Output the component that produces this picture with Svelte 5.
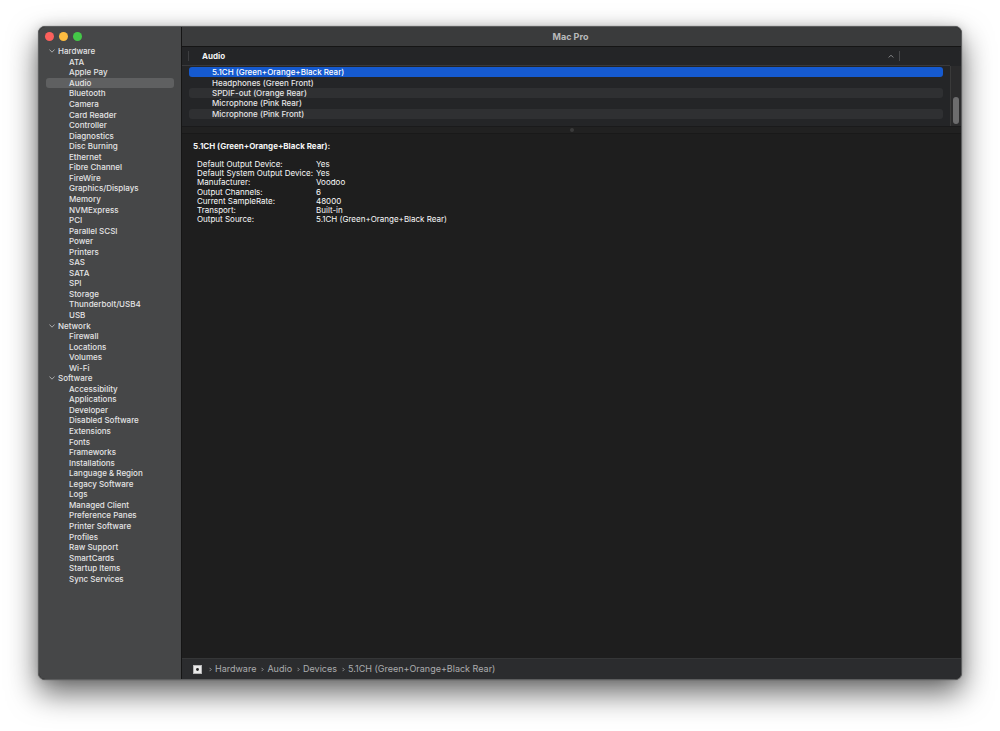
<script>
  const groups = [
    { name: 'Hardware', items: ['ATA', 'Apple Pay', 'Audio', 'Bluetooth', 'Camera', 'Card Reader', 'Controller', 'Diagnostics', 'Disc Burning', 'Ethernet', 'Fibre Channel', 'FireWire', 'Graphics/Displays', 'Memory', 'NVMExpress', 'PCI', 'Parallel SCSI', 'Power', 'Printers', 'SAS', 'SATA', 'SPI', 'Storage', 'Thunderbolt/USB4', 'USB'] },
    { name: 'Network', items: ['Firewall', 'Locations', 'Volumes', 'Wi-Fi'] },
    { name: 'Software', items: ['Accessibility', 'Applications', 'Developer', 'Disabled Software', 'Extensions', 'Fonts', 'Frameworks', 'Installations', 'Language & Region', 'Legacy Software', 'Logs', 'Managed Client', 'Preference Panes', 'Printer Software', 'Profiles', 'Raw Support', 'SmartCards', 'Startup Items', 'Sync Services'] }
  ];
  const devices = ['5.1CH (Green+Orange+Black Rear)', 'Headphones (Green Front)', 'SPDIF-out (Orange Rear)', 'Microphone (Pink Rear)', 'Microphone (Pink Front)'];
  const details = [
    ['Default Output Device:', 'Yes'],
    ['Default System Output Device:', 'Yes'],
    ['Manufacturer:', 'Voodoo'],
    ['Output Channels:', '6'],
    ['Current SampleRate:', '48000'],
    ['Transport:', 'Built-in'],
    ['Output Source:', '5.1CH (Green+Orange+Black Rear)']
  ];
  const path = ['Hardware', 'Audio', 'Devices', '5.1CH (Green+Orange+Black Rear)'];
  let section = $state('Audio');
  let device = $state(0);
</script>

<div class="desktop">
  <div class="window">
    <aside>
      <div class="lights">
        <button class="close" aria-label="Close"></button>
        <button class="minimise" aria-label="Minimise"></button>
        <button class="zoom" aria-label="Zoom"></button>
      </div>
      <nav>
        {#each groups as group}
          <button class="group">
            <svg viewBox="0 0 6 4" aria-hidden="true"><path d="M.7.8 3 3.2 5.3.8" /></svg>
            {group.name}
          </button>
          {#each group.items as item}
            <button class="item" class:selected={section === item} onclick={() => (section = item)}>{item}</button>
          {/each}
        {/each}
      </nav>
    </aside>
    <main>
      <header>Mac Pro</header>
      <section class="upper">
        <table class="devices">
          <thead>
            <tr>
              <th>
                <button class="sort">Audio
                  <svg viewBox="0 0 6 4" aria-hidden="true"><path d="M1 3.2 3 1.2 5 3.2" /></svg>
                </button>
              </th>
            </tr>
          </thead>
          <tbody>
            {#each devices as name, i}
              <tr class:active={device === i} onclick={() => (device = i)}><td>{name}</td></tr>
            {/each}
          </tbody>
        </table>
        <div class="track"><div class="thumb"></div></div>
      </section>
      <div class="splitter"><span></span></div>
      <section class="detail">
        <h1>5.1CH (Green+Orange+Black Rear):</h1>
        <table class="facts">
          <tbody>
            {#each details as [label, value]}
              <tr><th scope="row">{label}</th><td>{value}</td></tr>
            {/each}
          </tbody>
        </table>
      </section>
      <footer>
        <svg class="computer" viewBox="0 0 9 9" aria-hidden="true">
          <rect width="9" height="9" fill="#b5b5b6" />
          <rect x="1" y="1" width="7" height="7" fill="#e9e9e9" />
          <circle cx="4.5" cy="4.5" r="1.4" fill="#242424" />
        </svg>
        {#each path as step}
          <svg class="arrow" viewBox="0 0 3 5" aria-hidden="true"><path d="M.8 1.1 2.2 2.5.8 3.9" /></svg>
          <a href="#top">{step}</a>
        {/each}
      </footer>
    </main>
  </div>
</div>

<style>
  :global(body) { margin: 0; background: #fff; }
  * { box-sizing: border-box; }
  button {
    appearance: none; border: 0; margin: 0; padding: 0;
    background: none; color: inherit; font: inherit; text-align: left;
  }
  svg { fill: none; stroke: #aaabac; stroke-width: 1; stroke-linecap: round; stroke-linejoin: round; flex: none; }
  .desktop {
    min-height: 100vh; padding: 26px 38px 51px; display: flex; overflow: hidden;
    font-family: Inter, "Liberation Sans", sans-serif;
    font-size: 8px; font-weight: 500; line-height: 10px; color: #e4e4e5;
  }
  .window {
    flex: 1; display: flex; min-width: 0; overflow: hidden;
    border: 1px solid #5c5d5e; border-radius: 7px; background: #1e1e1e;
    box-shadow: 0 0 1px rgba(0, 0, 0, .6), 0 13px 30px rgba(0, 0, 0, .6), 0 0 12px rgba(0, 0, 0, .12);
  }
  aside { flex: none; width: 143px; background: #464748; border-right: 1px solid #151515; }
  .lights { display: flex; gap: 5px; padding: 5px 6px; height: 19px; }
  .lights button { width: 9px; height: 9px; border-radius: 50%; }
  .close { background: #fc605c; }
  .minimise { background: #fdbc40; }
  .zoom { background: #44c848; }
  nav { display: grid; grid-auto-rows: 1fr; height: 538px; padding: 0 7px; }
  nav button { display: flex; align-items: center; min-height: 0; white-space: nowrap; border-radius: 3px; }
  .group { gap: 3px; padding-left: 3px; }
  .group svg { width: 6px; height: 4px; }
  .item { padding-left: 23px; }
  .selected { background: #5f6061; }
  main { flex: 1; min-width: 0; display: flex; flex-direction: column; }
  header {
    height: 20px; padding-right: 2px; display: flex; align-items: center; justify-content: center;
    background: #3a3b3c; border-bottom: 1px solid #151515;
    font-size: 9px; font-weight: 700; color: #b8b9ba;
  }
  .upper { display: flex; background: #242527; border-bottom: 1px solid #1a1a1b; }
  .devices { display: block; flex: 1; }
  thead, thead tr, th { display: block; }
  thead { padding: 4px 0 4px 6px; border-bottom: 1px solid #39393b; }
  .devices th { border-left: 1px solid #3d3e40; margin-right: 50px; border-right: 1px solid #48494b; padding: 0; }
  .sort {
    display: flex; width: 100%; height: 10px; align-items: center; justify-content: space-between;
    padding: 0 5px 0 13px; font-weight: 700; color: #f3f3f3;
  }
  .sort svg { width: 6px; height: 4px; stroke: #8b8c8d; }
  .devices tbody { display: grid; grid-auto-rows: 1fr; height: 52px; margin: 1px 7px 7px; }
  .devices tbody tr { display: flex; align-items: center; min-height: 0; padding-left: 23px; border-radius: 3px; }
  .devices tbody tr:nth-child(odd) { background: #2f3032; }
  .devices tbody tr.active { background: #155ad0; color: #fff; }
  td { padding: 0; }
  .track { flex: none; width: 11px; margin-top: 19px; border-left: 1px solid #3a3a3a; background: #2b2b2c; padding: 31px 2px 1px; }
  .thumb { width: 6px; height: 27px; border-radius: 3px; background: #6c6c6d; }
  .splitter { height: 7px; display: flex; align-items: center; justify-content: center; background: #212121; border-bottom: 1px solid #191919; }
  .splitter span { width: 4px; height: 4px; border-radius: 50%; background: #3a3a3a; }
  .detail { flex: 1; padding: 7px 11px; }
  h1 { margin: 0 0 8px; font-size: 8px; line-height: 10px; font-weight: 700; color: #f5f5f5; }
  .facts { display: block; padding-left: 4px; color: #fafafa; }
  .facts tbody { display: grid; grid-auto-rows: 1fr; height: 65px; }
  .facts tr { display: flex; align-items: center; min-height: 0; font-weight: 400; }
  .facts th { width: 119px; padding: 0; font-weight: 400; text-align: left; white-space: nowrap; }
  footer {
    height: 21px; display: flex; align-items: center; padding-left: 11px;
    border-top: 1px solid #353637; background: #2b2c2e;
    font-size: 9px; font-weight: 400; color: #acadae;
  }
  footer a { color: inherit; text-decoration: none; white-space: nowrap; }
  .computer { width: 9px; height: 9px; margin-right: 2px; stroke: none; }
  .arrow { width: 3px; height: 5px; margin: 0 3px 0 5px; stroke-width: .8; }
</style>
